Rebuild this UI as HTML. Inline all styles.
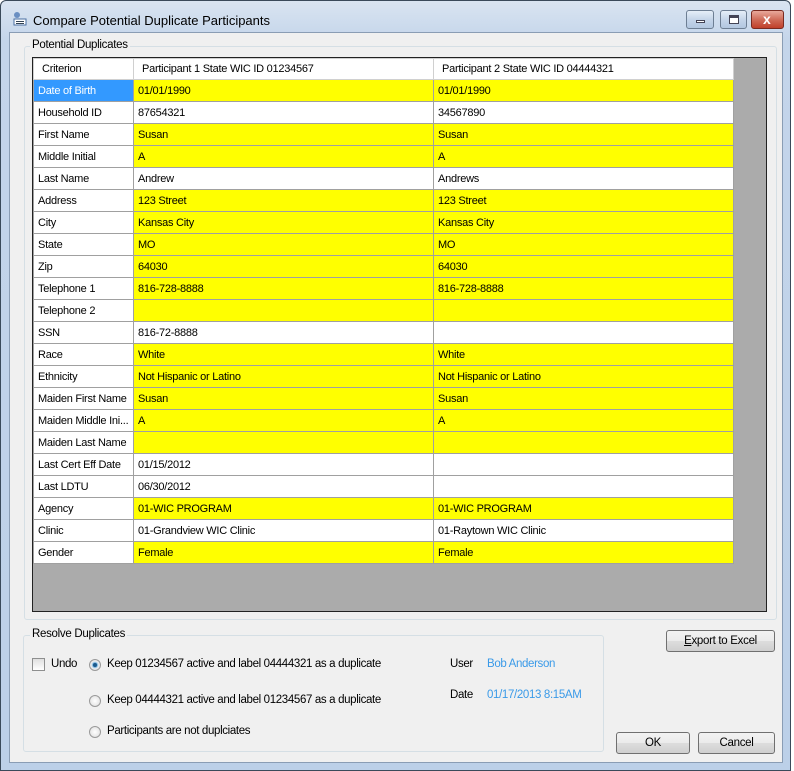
<!DOCTYPE html>
<html><head><style>
*{box-sizing:border-box;margin:0;padding:0}
body{width:794px;height:771px;overflow:hidden;background:#fff;font-family:"Liberation Sans",sans-serif;font-size:12px;color:#000;position:relative}
.win{position:absolute;left:0;top:0;width:791px;height:771px;border:1px solid #3a4a5a;border-radius:6px 6px 0 0;background:linear-gradient(#d9e4f1,#c4d5ea 40px,#bcd0e8);}
.client{position:absolute;left:8px;top:31px;width:774px;height:731px;background:#f0f0f0;border:1px solid #8a9db4}
.title{position:absolute;left:32px;top:12px;font-size:13px;color:#000}
.abs{position:absolute}
.gb{position:absolute;border:1px solid #d5dfe5;border-radius:3px}
.gbl{position:absolute;background:#f0f0f0;padding:0 2px;font-size:11.5px;letter-spacing:-.3px}
.grid{position:absolute;left:31px;top:56px;width:735px;height:555px;background:#ababab;border:1px solid #222}
table{border-collapse:collapse;table-layout:fixed;width:700px;position:absolute;left:0;top:0;font-size:11px;letter-spacing:-.25px}
td{height:22px;border:1px solid #a0a0a0;padding:0 4px;white-space:nowrap;overflow:hidden}
tr.h td{height:21px;background:#fff;border-color:#d0d0d0;padding-left:8px}
td.c{background:#fff}
tr.y td.v{background:#ffff00}
tr.w td.v{background:#fff}
.btn{position:absolute;height:22px;border:1px solid #707070;border-radius:3px;background:linear-gradient(#f2f2f2,#ebebeb 50%,#dddddd 51%,#cfcfcf);text-align:center;line-height:20px;font-size:11.5px;letter-spacing:-.3px}
.cap{position:absolute;top:9px;height:19px;border:1px solid #6d7e93;border-radius:3px;background:linear-gradient(#e6eef8,#c5d5e9 50%,#b3c7e0)}
.radio{position:absolute;width:12px;height:12px;border-radius:50%;border:1px solid #9a9a9a;background:radial-gradient(#fff,#dcdcdc)}
.t{position:absolute;font-size:11.5px;letter-spacing:-.35px}
</style></head><body>
<div class="win">
<svg class="abs" style="left:10px;top:9px" width="18" height="16" viewBox="0 0 18 16"><circle cx="6" cy="5" r="3" fill="#6a8fc2"/><rect x="3" y="9" width="12" height="6" fill="#fff" stroke="#4a6fa2"/><rect x="5" y="11" width="8" height="1" fill="#345"/><rect x="5" y="13" width="8" height="1" fill="#345"/></svg>
<div class="title">Compare Potential Duplicate Participants</div>
<div class="cap" style="left:685px;width:28px"><div class="abs" style="left:9px;top:9px;width:9px;height:3px;background:#fff;border:1px solid #445"></div></div>
<div class="cap" style="left:719px;width:27px"><div class="abs" style="left:8px;top:4px;width:10px;height:9px;border:1px solid #445;background:#fff;border-top-width:3px"></div></div>
<div class="cap" style="left:750px;width:33px;border-color:#7a2a20;background:linear-gradient(#e8a89b,#d06d5a 50%,#c0402a)"><div class="abs" style="left:11px;top:0px;color:#fff;font-weight:bold;font-size:14px">x</div></div>
<div class="client"></div>
<div class="gb" style="left:23px;top:45px;width:753px;height:574px"></div>
<div class="gbl" style="left:29px;top:38px">Potential Duplicates</div>
<div class="grid"><table>
<colgroup><col style="width:100px"><col style="width:300px"><col style="width:300px"></colgroup>
<tr class="h"><td class="c">Criterion</td><td class="v">Participant 1 State WIC ID 01234567</td><td class="v">Participant 2 State WIC ID 04444321</td></tr>
<tr class="y"><td class="c" style="background:#3399ff;color:#fff">Date of Birth</td><td class="v">01/01/1990</td><td class="v">01/01/1990</td></tr>
<tr class="w"><td class="c">Household ID</td><td class="v">87654321</td><td class="v">34567890</td></tr>
<tr class="y"><td class="c">First Name</td><td class="v">Susan</td><td class="v">Susan</td></tr>
<tr class="y"><td class="c">Middle Initial</td><td class="v">A</td><td class="v">A</td></tr>
<tr class="w"><td class="c">Last Name</td><td class="v">Andrew</td><td class="v">Andrews</td></tr>
<tr class="y"><td class="c">Address</td><td class="v">123 Street</td><td class="v">123 Street</td></tr>
<tr class="y"><td class="c">City</td><td class="v">Kansas City</td><td class="v">Kansas City</td></tr>
<tr class="y"><td class="c">State</td><td class="v">MO</td><td class="v">MO</td></tr>
<tr class="y"><td class="c">Zip</td><td class="v">64030</td><td class="v">64030</td></tr>
<tr class="y"><td class="c">Telephone 1</td><td class="v">816-728-8888</td><td class="v">816-728-8888</td></tr>
<tr class="y"><td class="c">Telephone 2</td><td class="v"></td><td class="v"></td></tr>
<tr class="w"><td class="c">SSN</td><td class="v">816-72-8888</td><td class="v"></td></tr>
<tr class="y"><td class="c">Race</td><td class="v">White</td><td class="v">White</td></tr>
<tr class="y"><td class="c">Ethnicity</td><td class="v">Not Hispanic or Latino</td><td class="v">Not Hispanic or Latino</td></tr>
<tr class="y"><td class="c">Maiden First Name</td><td class="v">Susan</td><td class="v">Susan</td></tr>
<tr class="y"><td class="c">Maiden Middle Ini...</td><td class="v">A</td><td class="v">A</td></tr>
<tr class="y"><td class="c">Maiden Last Name</td><td class="v"></td><td class="v"></td></tr>
<tr class="w"><td class="c">Last Cert Eff Date</td><td class="v">01/15/2012</td><td class="v"></td></tr>
<tr class="w"><td class="c">Last LDTU</td><td class="v">06/30/2012</td><td class="v"></td></tr>
<tr class="y"><td class="c">Agency</td><td class="v">01-WIC PROGRAM</td><td class="v">01-WIC PROGRAM</td></tr>
<tr class="w"><td class="c">Clinic</td><td class="v">01-Grandview WIC Clinic</td><td class="v">01-Raytown WIC Clinic</td></tr>
<tr class="y"><td class="c">Gender</td><td class="v">Female</td><td class="v">Female</td></tr>
</table></div>

<div class="gb" style="left:22px;top:634px;width:581px;height:117px"></div>
<div class="gbl" style="left:29px;top:627px">Resolve Duplicates</div>
<div class="abs" style="left:31px;top:657px;width:13px;height:13px;border:1px solid #8e8f8f;background:linear-gradient(#e0e0e0,#fff)"></div>
<div class="t" style="left:50px;top:657px">Undo</div>
<div class="radio" style="left:88px;top:658px"><div class="abs" style="left:3px;top:3px;width:4px;height:4px;border-radius:50%;background:#1c5a8c;box-shadow:0 0 1px 1px #6cb0e0"></div></div>
<div class="t" style="left:106px;top:657px">Keep 01234567 active and label 04444321 as a duplicate</div>
<div class="radio" style="left:88px;top:694px"></div>
<div class="t" style="left:106px;top:693px">Keep 04444321 active and label 01234567 as a duplicate</div>
<div class="radio" style="left:88px;top:725px"></div>
<div class="t" style="left:106px;top:724px">Participants are not duplciates</div>
<div class="t" style="left:449px;top:657px">User</div>
<div class="t" style="left:486px;top:657px;color:#3a9ae8">Bob Anderson</div>
<div class="t" style="left:449px;top:688px">Date</div>
<div class="t" style="left:486px;top:688px;color:#3a9ae8">01/17/2013 8:15AM</div>
<div class="btn" style="left:665px;top:629px;width:109px"><u>E</u>xport to Excel</div>
<div class="btn" style="left:615px;top:731px;width:74px">OK</div>
<div class="btn" style="left:697px;top:731px;width:77px">Cancel</div>
</div>
</body></html>
